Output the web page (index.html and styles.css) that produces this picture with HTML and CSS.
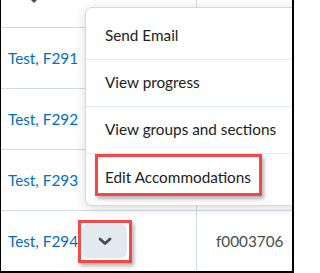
FILE: index.html
```html
<!DOCTYPE html>
<html lang="en">
<head>
<meta charset="utf-8">
<link rel="stylesheet" href="styles.css">
</head>
<body>
<div class="frame">
  <div class="row head">
    <div class="cell c1">
      <svg class="caret" width="8" height="4" viewBox="0 0 8 4"><path d="M1 0 L7 0 L4 3 Z" fill="#494c4e"/></svg>
    </div>
    <div class="cell c2"></div>
  </div>
  <div class="row">
    <div class="cell c1"><a class="name">Test, F291</a></div>
    <div class="cell c2"></div>
  </div>
  <div class="row">
    <div class="cell c1"><a class="name">Test, F292</a></div>
    <div class="cell c2"></div>
  </div>
  <div class="row">
    <div class="cell c1"><a class="name">Test, F293</a></div>
    <div class="cell c2"></div>
  </div>
  <div class="row last">
    <div class="cell c1">
      <a class="name">Test, F294</a>
      <button class="more" aria-label="Actions">
        <svg width="14" height="9" viewBox="0 0 14 9"><path d="M2 2 L7 6.5 L12 2" fill="none" stroke="#494c4e" stroke-width="2.8" stroke-linecap="round" stroke-linejoin="round"/></svg>
      </button>
    </div>
    <div class="cell c2"><span class="org">f0003706</span></div>
  </div>

  <ul class="menu">
    <li class="item">Send Email</li>
    <li class="item">View progress</li>
    <li class="item">View groups and sections</li>
    <li class="item">Edit Accommodations</li>
  </ul>

  <div class="mark mark-item"></div>
  <div class="mark mark-btn"></div>
</div>
</body>
</html>
```

FILE: styles.css
```css
* { box-sizing: border-box; }
html, body { margin: 0; padding: 0; background: #fff; }
body { font-family: Lato, "Noto Sans", sans-serif; font-size: 15.3px; }

.frame {
  position: relative;
  width: 294px;
  height: 273px;
  border-left: 1px solid #000;
  border-right: 2px solid #000;
  border-bottom: 2px solid #000;
  overflow: hidden;
  background: #fff;
}

.row {
  display: flex;
  height: 61px;
  border-bottom: 1px solid #d3d9e3;
}
.row.head { height: 28px; }
.row.last { height: 60px; border-bottom: none; }

.cell { display: flex; align-items: center; }
.c1 { width: 196px; border-right: 1px solid #d3d9e3; padding-left: 7px; }
.c2 { flex: 1; padding-left: 19px; }

.head .c1 { align-items: flex-start; padding-left: 29px; }
.caret { display: block; }

.name { color: #006fbf; text-decoration: none; line-height: 20px; }

.more {
  margin-left: 4px;
  width: 45px;
  height: 34px;
  border: none;
  border-radius: 6px;
  background: #e3e9f1;
  display: flex;
  align-items: center;
  justify-content: center;
  padding: 0;
}
.more svg { display: block; }

.org { color: #494c4e; }

.menu {
  position: absolute;
  left: 84px;
  top: 7px;
  width: 260px;
  height: 199px;
  margin: 0;
  padding: 5px 0 0 0;
  list-style: none;
  background: #fff;
  border: 1px solid #d3d9e3;
  border-radius: 7px;
  box-shadow: 0 2px 12px rgba(0, 0, 0, 0.15);
}
.item {
  height: 47px;
  padding: 0 0 2px 19px;
  display: flex;
  align-items: center;
  color: #202122;
  border-bottom: 1px solid #e3e9f1;
}
.item:last-child { border-bottom: none; }

.mark {
  position: absolute;
  border: 3px solid #f34848;
  box-shadow: 2px 3px 4px rgba(0, 0, 0, 0.3);
}
.mark-item { left: 94px; top: 154px; width: 167px; height: 42px; }
.mark-btn { left: 77px; top: 220px; width: 54px; height: 43px; }
```
